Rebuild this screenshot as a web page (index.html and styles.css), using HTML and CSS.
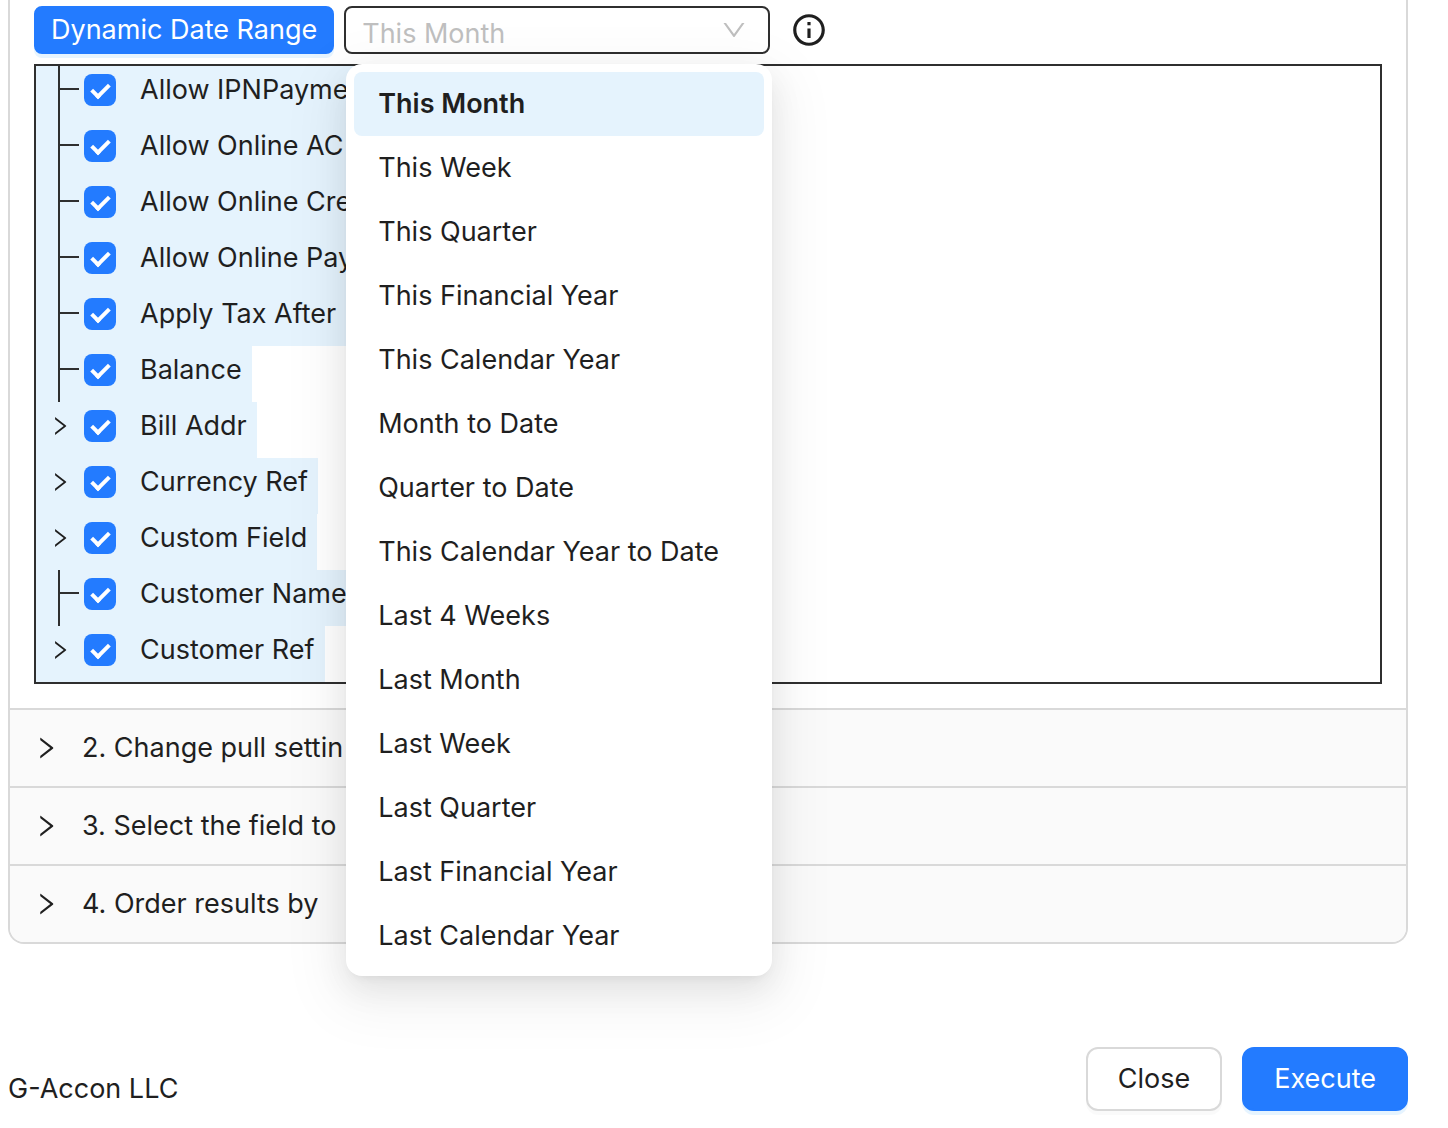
FILE: index.html
```html
<!DOCTYPE html>
<html lang="en">
  <head>
    <meta charset="UTF-8" />
    <meta name="viewport" content="width=device-width, initial-scale=1.0" />
    <title>G-Accon</title>
    <link rel="stylesheet" href="styles.css">
  </head>
  <body>
    <svg class="sprite" xmlns="http://www.w3.org/2000/svg" aria-hidden="true">
      <symbol id="icon-right" viewBox="0 0 1024 1024">
        <path d="M765.7 486.8L314.9 134.7A7.97 7.97 0 00302 141v77.3c0 4.9 2.3 9.6 6.1 12.6l360 281.1-360 281.1c-3.9 3-6.1 7.7-6.1 12.6V883c0 6.7 7.7 10.4 12.9 6.3l450.8-352.1a31.96 31.96 0 000-50.4z"></path>
      </symbol>
      <symbol id="icon-down" viewBox="0 0 1024 1024">
        <path d="M884 256h-75c-5.1 0-9.9 2.5-12.9 6.6L512 654.2 227.9 262.6c-3-4.1-7.8-6.6-12.9-6.6h-75c-6.5 0-10.3 7.4-6.5 12.7l352.6 486.1c12.8 17.6 39 17.6 51.7 0l352.6-486.1c3.9-5.3.1-12.7-6.4-12.7z"></path>
      </symbol>
    </svg>

    <main class="page">
      <div class="collapse">
        <section class="panel">
          <div class="toolbar">
            <button class="btn btn-primary btn-small">Dynamic Date Range</button>
            <div class="select">
              <select class="select-input" aria-label="Date range">
                <option>This Month</option>
              </select>
              <svg class="select-arrow"><use href="#icon-down"></use></svg>
              <ul class="dropdown" role="listbox" aria-label="Date range options">
                <li class="option selected" role="option" aria-selected="true">This Month</li>
                <li class="option" role="option">This Week</li>
                <li class="option" role="option">This Quarter</li>
                <li class="option" role="option">This Financial Year</li>
                <li class="option" role="option">This Calendar Year</li>
                <li class="option" role="option">Month to Date</li>
                <li class="option" role="option">Quarter to Date</li>
                <li class="option" role="option">This Calendar Year to Date</li>
                <li class="option" role="option">Last 4 Weeks</li>
                <li class="option" role="option">Last Month</li>
                <li class="option" role="option">Last Week</li>
                <li class="option" role="option">Last Quarter</li>
                <li class="option" role="option">Last Financial Year</li>
                <li class="option" role="option">Last Calendar Year</li>
              </ul>
            </div>
            <button class="info-btn" aria-label="Info">
              <svg class="info-icon" viewBox="0 0 24 24">
                <path d="M11 7h2v2h-2zm0 4h2v6h-2zm1-9C6.48 2 2 6.48 2 12s4.48 10 10 10 10-4.48 10-10S17.52 2 12 2zm0 18c-4.41 0-8-3.59-8-8s3.59-8 8-8 8 3.59 8 8-3.59 8-8 8z"></path>
              </svg>
            </button>
          </div>

          <ul class="tree">
            <li class="tree-node">
              <span class="switcher leaf"></span>
              <input type="checkbox" class="checkbox" id="node1" checked />
              <label class="tree-label" for="node1">Allow IPNPayme</label>
            </li>
            <li class="tree-node">
              <span class="switcher leaf"></span>
              <input type="checkbox" class="checkbox" id="node2" checked />
              <label class="tree-label" for="node2">Allow Online AC</label>
            </li>
            <li class="tree-node">
              <span class="switcher leaf"></span>
              <input type="checkbox" class="checkbox" id="node3" checked />
              <label class="tree-label" for="node3">Allow Online Cre</label>
            </li>
            <li class="tree-node">
              <span class="switcher leaf"></span>
              <input type="checkbox" class="checkbox" id="node4" checked />
              <label class="tree-label" for="node4">Allow Online Pay</label>
            </li>
            <li class="tree-node">
              <span class="switcher leaf"></span>
              <input type="checkbox" class="checkbox" id="node5" checked />
              <label class="tree-label" for="node5">Apply Tax After</label>
            </li>
            <li class="tree-node">
              <span class="switcher leaf"></span>
              <input type="checkbox" class="checkbox" id="node6" checked />
              <label class="tree-label" for="node6">Balance</label>
            </li>
            <li class="tree-node">
              <button class="switcher" aria-label="Expand"><svg class="switcher-icon"><use href="#icon-right"></use></svg></button>
              <input type="checkbox" class="checkbox" id="node7" checked />
              <label class="tree-label" for="node7">Bill Addr</label>
            </li>
            <li class="tree-node">
              <button class="switcher" aria-label="Expand"><svg class="switcher-icon"><use href="#icon-right"></use></svg></button>
              <input type="checkbox" class="checkbox" id="node8" checked />
              <label class="tree-label" for="node8">Currency Ref</label>
            </li>
            <li class="tree-node">
              <button class="switcher" aria-label="Expand"><svg class="switcher-icon"><use href="#icon-right"></use></svg></button>
              <input type="checkbox" class="checkbox" id="node9" checked />
              <label class="tree-label" for="node9">Custom Field</label>
            </li>
            <li class="tree-node">
              <span class="switcher leaf"></span>
              <input type="checkbox" class="checkbox" id="node10" checked />
              <label class="tree-label" for="node10">Customer Name</label>
            </li>
            <li class="tree-node">
              <button class="switcher" aria-label="Expand"><svg class="switcher-icon"><use href="#icon-right"></use></svg></button>
              <input type="checkbox" class="checkbox" id="node11" checked />
              <label class="tree-label" for="node11">Customer Ref</label>
            </li>
          </ul>
        </section>

        <button class="collapse-header">
          <svg class="collapse-icon"><use href="#icon-right"></use></svg>
          2. Change pull settin
        </button>
        <button class="collapse-header">
          <svg class="collapse-icon"><use href="#icon-right"></use></svg>
          3. Select the field to
        </button>
        <button class="collapse-header">
          <svg class="collapse-icon"><use href="#icon-right"></use></svg>
          4. Order results by
        </button>
      </div>

      <footer class="footer">
        <span class="company">G-Accon LLC</span>
        <div class="actions">
          <button class="btn">Close</button>
          <button class="btn btn-primary">Execute</button>
        </div>
      </footer>
    </main>
  </body>
</html>
```

FILE: styles.css
```css
*,
*::before,
*::after {
  box-sizing: border-box;
}
body {
  margin: 0;
  background-color: #fff;
  color: #1f1f1f;
  font-family: Inter, Roboto, sans-serif;
  font-size: 27px;
  line-height: 44px;
}
button,
select {
  font: inherit;
  color: inherit;
  cursor: pointer;
}
svg {
  fill: currentColor;
}
ul {
  list-style: none;
  margin: 0;
  padding: 0;
}
.sprite {
  display: none;
}
.page {
  padding: 0 40px 16px 8px;
}

/* buttons */
.btn {
  height: 64px;
  padding: 0 30px;
  border: 2px solid #d9d9d9;
  border-radius: 12px;
  background-color: #fff;
  box-shadow: 0 4px 0 rgba(0, 0, 0, 0.02);
  white-space: nowrap;
}
.btn-primary {
  border-color: #237bff;
  background-color: #237bff;
  color: #fff;
  box-shadow: 0 4px 0 rgba(5, 145, 255, 0.1);
}
.btn-small {
  height: 48px;
  padding: 0 15px;
  border-radius: 8px;
}

/* collapse */
.collapse {
  border: 2px solid #d9d9d9;
  border-top: none;
  border-radius: 0 0 16px 16px;
}
.panel {
  padding: 6px 24px 24px;
}
.collapse-header {
  display: flex;
  align-items: center;
  gap: 22px;
  width: 100%;
  height: 78px;
  padding: 0 22px;
  border: none;
  border-top: 2px solid #d9d9d9;
  background-color: #fafafa;
  text-align: left;
}
.collapse-header:last-child {
  border-radius: 0 0 14px 14px;
}
.collapse-icon {
  width: 28px;
  height: 28px;
}

/* toolbar */
.toolbar {
  display: flex;
  align-items: center;
  gap: 10px;
  margin-bottom: 10px;
}
.select {
  position: relative;
  width: 426px;
  height: 48px;
}
.select-input {
  appearance: none;
  width: 100%;
  height: 100%;
  padding: 4px 48px 0 16px;
  border: 2px solid #2f2f2f;
  border-radius: 8px;
  background-color: #fff;
  color: #bfbfbf;
}
.select-arrow {
  position: absolute;
  top: 10px;
  right: 22px;
  width: 28px;
  height: 28px;
  color: #bfbfbf;
  pointer-events: none;
}
.dropdown {
  position: absolute;
  top: 58px;
  left: 2px;
  z-index: 10;
  width: 100%;
  padding: 8px;
  border-radius: 16px;
  background-color: #fff;
  box-shadow: 0 12px 32px 0 rgba(0, 0, 0, 0.08),
    0 6px 12px -8px rgba(0, 0, 0, 0.12), 0 18px 56px 16px rgba(0, 0, 0, 0.05);
}
.option {
  padding: 10px 24px;
  border-radius: 8px;
  cursor: pointer;
}
.option.selected {
  background-color: #e5f3fd;
  font-weight: 600;
}
.info-btn {
  display: flex;
  margin-left: 10px;
  padding: 0;
  border: none;
  background: none;
}
.info-icon {
  width: 38px;
  height: 38px;
}

/* tree */
.tree {
  border: 2px solid #2f2f2f;
}
.tree-node {
  display: flex;
  width: fit-content;
  height: 56px;
  background-color: #e5f3fd;
}
.switcher {
  display: flex;
  justify-content: center;
  align-items: center;
  width: 48px;
  height: 48px;
  padding: 0;
  border: none;
  background: none;
}
.switcher-icon {
  width: 24px;
  height: 24px;
}
/* connector line of nodes without children */
.leaf {
  align-items: flex-start;
  justify-content: flex-start;
  width: 26px;
  height: 56px;
  margin-left: 22px;
  border-left: 2px solid #2f2f2f;
}
.leaf::before {
  content: "";
  width: 19px;
  height: 24px;
  border-bottom: 2px solid #2f2f2f;
}
.tree-label {
  padding: 0 10px 0 24px;
  line-height: 48px;
  white-space: nowrap;
}
.checkbox {
  appearance: none;
  display: flex;
  justify-content: center;
  width: 32px;
  height: 32px;
  margin: 8px 0;
  border-radius: 8px;
  background-color: #237bff;
}
.checkbox::after {
  content: "";
  width: 11px;
  height: 18px;
  margin-top: 6px;
  border: solid #fff;
  border-width: 0 4px 4px 0;
  transform: rotate(45deg);
}

/* footer */
.footer {
  display: flex;
  justify-content: space-between;
  align-items: flex-end;
  margin-top: 103px;
}
.actions {
  display: flex;
  gap: 20px;
}
```
